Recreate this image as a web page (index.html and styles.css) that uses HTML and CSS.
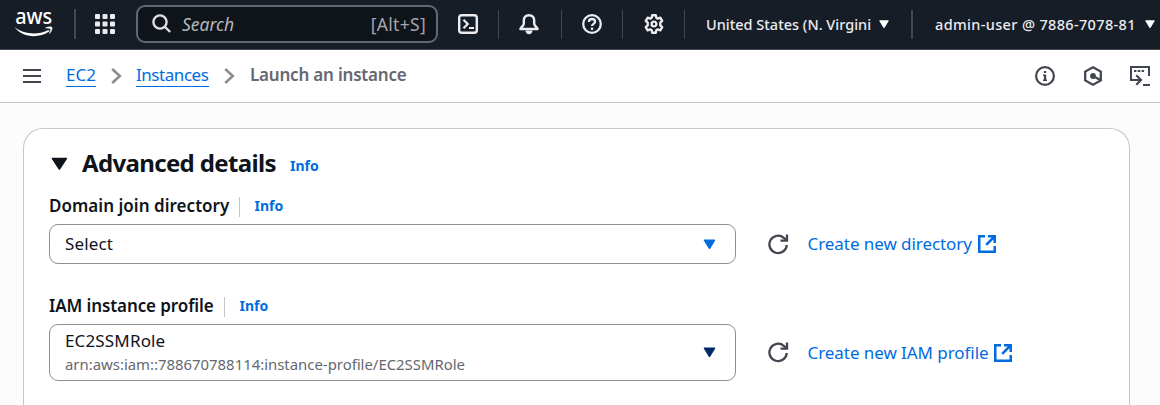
FILE: index.html
```html
<!DOCTYPE html>
<html lang="en">
<head>
<meta charset="utf-8">
<title>Launch an instance</title>
<link rel="stylesheet" href="styles.css">
</head>
<body>
<header class="topnav">
  <svg class="logo" width="40" height="34" viewBox="0 -6 40 34"><text class="logo-text" x="1.200" y="14" textLength="37" lengthAdjust="spacingAndGlyphs">aws</text><path d="M.3 17.300c10.500 7.300 23 8.200 34.200 2.700l1 1.200C24.500 28.600 9.500 28 .3 17.300z" fill="#fff"/><path d="M31.500 18c3.200-1.500 6-1.300 6.500-.6.500.9-.4 4.300-2.600 6.200.9-2.400 1.500-4.200 1.100-4.700-.4-.6-2.400-.7-5-.9z" fill="#fff" stroke="#fff" stroke-width=".5"/></svg>
  <span class="divider d-logo"></span>
  <svg class="apps" width="20" height="20" viewBox="0 0 20 20" fill="#ebebf0"><rect width="5" height="5" rx="1"/><rect x="7.500" width="5" height="5" rx="1"/><rect x="15" width="5" height="5" rx="1"/><rect y="7.500" width="5" height="5" rx="1"/><rect x="7.500" y="7.500" width="5" height="5" rx="1"/><rect x="15" y="7.500" width="5" height="5" rx="1"/><rect y="15" width="5" height="5" rx="1"/><rect x="7.500" y="15" width="5" height="5" rx="1"/><rect x="15" y="15" width="5" height="5" rx="1"/></svg>
  <div class="search">
    <svg width="20" height="20" viewBox="0 0 20 20" fill="none" stroke="#dedee3" stroke-width="2.400"><circle cx="8" cy="8" r="6.600"/><path d="M12.700 12.700l5.500 5.300"/></svg>
    <span class="t search-text">Search</span>
    <span class="t search-key">[Alt+S]</span>
  </div>
  <svg class="ic-shell" width="20" height="20" viewBox="0 0 20 20" fill="none" stroke="#ebebf0" stroke-width="2.400"><rect x="1.200" y="1.200" width="17.600" height="17.600" rx="2.600"/><path d="M5.500 5.800L9.700 10l-4.200 4.200M11 14h5" stroke-width="2.200"/></svg>
  <span class="divider d1"></span>
  <svg class="ic-bell" width="20" height="21" viewBox="0 0 20 21"><path d="M10 1.200c-3.300 0-5.200 2.200-5.200 5v3.600c0 1.800-2.800 3.300-3.400 5.200h17.200c-.6-1.900-3.400-3.400-3.400-5.200V6.200c0-2.800-1.900-5-5.200-5z" fill="none" stroke="#ebebf0" stroke-width="2.400" stroke-linejoin="round"/><path d="M6.500 16.500h7c0 2.200-1.500 3.800-3.500 3.800s-3.500-1.600-3.500-3.800z" fill="#ebebf0"/></svg>
  <span class="divider d2"></span>
  <svg class="ic-help" width="20" height="20" viewBox="0 0 20 20" fill="none" stroke="#ebebf0" stroke-width="2.300"><circle cx="10" cy="10" r="8.800"/><path d="M6.900 7.900C6.900 6 8.200 5 10 5s3.100 1.100 3.100 2.700c0 2.100-3.100 2.200-3.100 4.300"/><path d="M10 13.600v2.300"/></svg>
  <span class="divider d3"></span>
  <svg class="ic-gear" width="20" height="20" viewBox="0 0 20 20" fill="none" stroke="#ebebf0" stroke-width="2.400" stroke-linejoin="round"><path d="M8.200 1.200h3.600l.5 2.500 1.500.9 2.500-.9 1.900 3.100-1.900 1.800v2.800l1.900 1.800-1.900 3.100-2.500-.9-1.500.9-.5 2.500H8.200l-.5-2.500-1.500-.9-2.500.9-1.900-3.100 1.900-1.800V8.600L1.800 6.800l1.900-3.100 2.500.9 1.500-.9z"/><circle cx="10" cy="10" r="2.400"/></svg>
  <span class="divider d4"></span>
  <span class="t region">United States (N. Virgini</span>
  <svg class="caret-region" width="10" height="9" viewBox="0 0 10 9"><path d="M.7.8h8.600L5 7.800z" fill="#fff" stroke="#fff" stroke-linejoin="round"/></svg>
  <span class="divider d5"></span>
  <span class="t account">admin-user @ 7886-7078-81</span>
  <svg class="caret-account" width="10" height="9" viewBox="0 0 10 9"><path d="M.7.8h8.600L5 7.800z" fill="#fff" stroke="#fff" stroke-linejoin="round"/></svg>
</header>

<nav class="crumbs">
  <svg class="menu" width="18" height="16" viewBox="0 0 18 16" fill="none" stroke="#424650" stroke-width="2"><path d="M0 2h18M0 8h18M0 14h18"/></svg>
  <a class="t crumb c-ec2">EC2</a>
  <svg class="chev" width="11" height="16" viewBox="0 0 11 16" fill="none" stroke="#8c8c94" stroke-width="2.600"><path d="M1.200 1l7.600 7-7.600 7"/></svg>
  <a class="t crumb c-inst">Instances</a>
  <svg class="chev" width="11" height="16" viewBox="0 0 11 16" fill="none" stroke="#8c8c94" stroke-width="2.600"><path d="M1.200 1l7.600 7-7.600 7"/></svg>
  <span class="t crumb-current">Launch an instance</span>
  <span class="tools">
    <svg width="20" height="20" viewBox="0 0 20 20"><circle cx="10" cy="10" r="8.900" fill="none" stroke="#424650" stroke-width="2.200"/><path d="M8.900 5h2.300v2H8.900zM8 8.500h3.200v5H12v1.600H8v-1.600h.9v-3.400H8z" fill="#424650"/></svg>
    <svg width="20" height="20" viewBox="0 0 20 20"><path d="M10 1.300l7.800 4.300v8.800L10 18.700l-7.800-4.300V5.600z" fill="none" stroke="#424650" stroke-width="2.300"/><circle cx="10" cy="10" r="2.900" fill="#424650"/><path d="M10 10l7.800 4.300" stroke="#424650" stroke-width="2.300"/></svg>
    <svg width="20" height="20" viewBox="0 0 20 20" fill="none" stroke="#424650" stroke-width="2"><path d="M5.300 14H1V1h18v9M13 19h7"/><path d="M4 5h2.500M7.800 5h2.500M11.600 5h2.500"/><path d="M4 14h6.500M6.300 9.200l4.700 4.800-4.700 4.800" stroke-width="2.200"/></svg>
  </span>
</nav>

<main class="page">
  <section class="card">
    <div class="card-head">
      <svg width="17" height="14" viewBox="0 0 17 14"><path d="M1.500 1.500h13.800L8.400 12z" fill="#0f141a" stroke="#0f141a" stroke-width="1.600" stroke-linejoin="round"/></svg>
      <h2 class="t title">Advanced details</h2>
      <a class="t info info-title">Info</a>
    </div>
    <div class="label-row">
      <label class="t label l-domain">Domain join directory</label>
      <span class="label-sep"></span>
      <a class="t info">Info</a>
    </div>
    <div class="field-row">
      <div class="select">
        <span class="t value v-select">Select</span>
        <svg class="select-caret" width="13" height="11" viewBox="0 0 13 11"><path d="M1 1h11L6.500 10z" fill="#006ce0" stroke="#006ce0" stroke-linejoin="round"/></svg>
      </div>
      <svg class="refresh" width="21" height="21" viewBox="0 0 21 21" fill="none" stroke="#424650" stroke-width="2.300"><path d="M18.800 11a8.700 8.700 0 1 1-3-7.200l2.400 2.200"/><path d="M19 .5v6.200h-6.500"/></svg>
      <a class="t link k-dir">Create new directory</a>
      <svg class="ext" width="18" height="18" viewBox="0 0 18 18" fill="none" stroke="#006ce0" stroke-width="2.500"><path d="M7 1.250H1.250v15.500h15.500V11M10 1.250h6.750V8M16.500 1.500L8.200 9.800"/></svg>
    </div>
    <div class="label-row second">
      <label class="t label l-iam">IAM instance profile</label>
      <span class="label-sep"></span>
      <a class="t info">Info</a>
    </div>
    <div class="field-row">
      <div class="select tall">
        <div class="stack">
          <span class="t value v-role">EC2SSMRole</span>
          <span class="t arn">arn:aws:iam::788670788114:instance-profile/EC2SSMRole</span>
        </div>
        <svg class="select-caret" width="13" height="11" viewBox="0 0 13 11"><path d="M1 1h11L6.500 10z" fill="#002b66" stroke="#002b66" stroke-linejoin="round"/></svg>
      </div>
      <svg class="refresh" width="21" height="21" viewBox="0 0 21 21" fill="none" stroke="#424650" stroke-width="2.300"><path d="M18.800 11a8.700 8.700 0 1 1-3-7.200l2.400 2.200"/><path d="M19 .5v6.200h-6.500"/></svg>
      <a class="t link k-iam">Create new IAM profile</a>
      <svg class="ext" width="18" height="18" viewBox="0 0 18 18" fill="none" stroke="#006ce0" stroke-width="2.500"><path d="M7 1.250H1.250v15.500h15.500V11M10 1.250h6.750V8M16.500 1.500L8.200 9.800"/></svg>
    </div>
  </section>
</main>
</body>
</html>
```
FILE: styles.css
```css
* { box-sizing: border-box; }
body {
  margin: 0;
  height: 405px;
  overflow: hidden;
  display: flex;
  flex-direction: column;
  background: #fcfcfd;
  color: #0f141a;
  font-family: "Noto Sans", "Open Sans", sans-serif;
  font-size: 17px;
}
svg { display: block; flex: none; }
.t { display: block; flex: none; white-space: nowrap; line-height: 24px; }

.topnav {
  flex: none;
  height: 50px;
  display: flex;
  align-items: center;
  padding: 0 0 1px 14px;
  background: #161d26;
  border-bottom: 1px solid #424650;
  color: #ebebf0;
}
.logo { margin-top: -7px; overflow: visible; }
.logo-text { font-family: "Noto Sans", sans-serif; font-size: 21.500px; font-weight: 500; fill: #fff; }
.divider { flex: none; width: 1px; height: 29px; background: #424650; }
.d-logo { width: 2px; height: 30px; margin-left: 20px; }
.apps { margin-left: 19px; }
.search {
  flex: none;
  width: 302px;
  height: 38px;
  margin-left: 21px;
  padding: 0 10px 0 14px;
  display: flex;
  align-items: center;
  background: #0f141a;
  border: 2px solid #656871;
  border-radius: 9px;
}
.search-text { margin-left: 10px; width: 60px; font-size: 17.500px; font-style: italic; color: #b4b4bb; }
.search-key { margin-left: auto; font-size: 17.500px; letter-spacing: .3px; color: #a4a4ad; }
.ic-shell { margin-left: 20px; }
.d1 { margin-left: 20px; }
.ic-bell { margin-left: 20px; }
.d2 { margin-left: 22px; }
.ic-help { margin-left: 20px; }
.d3 { margin-left: 20px; }
.ic-gear { margin-left: 21px; }
.d4 { margin-left: 20px; }
.region { margin-left: 21px; width: 173px; font-size: 14.500px; font-weight: 500; }
.d5 { width: 2px; margin-left: 22px; }
.account { margin-left: 22px; width: 210px; font-size: 14.500px; font-weight: 500; letter-spacing: .35px; }

.crumbs {
  flex: none;
  height: 53px;
  display: flex;
  align-items: center;
  padding: 0 10px 0 23px;
  background: #fff;
  border-bottom: 1px solid #c6c6cd;
}
.crumb { color: #006ce0; height: 22px; line-height: 20px; border-bottom: 1px solid #006ce0; margin-top: -1px; }
.c-ec2 { margin-left: 25px; width: 30px; }
.c-inst { margin-left: 14px; width: 73px; letter-spacing: -.45px; }
.chev { margin-left: 15px; }
.crumb-current { margin-left: 15px; color: #656871; font-weight: 600; margin-top: -2px; letter-spacing: -.2px; }
.tools { display: flex; gap: 27.500px; margin-left: auto; }

.page { flex: 1; display: flex; padding: 25px 30px 0 23px; }
.card {
  flex: 1;
  padding: 19px 25px 0;
  background: #fff;
  border: 1px solid #c6c6cd;
  border-bottom: 0;
  border-radius: 20px 20px 0 0;
}
.card-head { display: flex; align-items: center; height: 30px; padding: 1px 0 0 2px; }
.title { margin: -1px 0 0 14px; width: 195px; font-size: 24px; font-weight: 700; line-height: 30px; letter-spacing: -.65px; }
.info { color: #006ce0; font-size: 14px; font-weight: 700; }
.info-title { margin: 5px 0 0 13px; }
.label-row { display: flex; align-items: center; height: 24px; margin-top: 16px; margin-bottom: 6px; }
.label { font-weight: 600; }
.l-domain { width: 180px; letter-spacing: .03px; }
.l-iam { width: 165px; letter-spacing: -.1px; }
.label-sep { width: 1px; height: 20px; margin: 2px 14.500px 0 10px; background: #c6c6cd; }
.field-row { display: flex; align-items: center; }
.select {
  flex: none;
  width: 687px;
  height: 40px;
  padding: 0 19px 0 15px;
  display: flex;
  align-items: center;
  justify-content: space-between;
  border: 1px solid #8c8c94;
  border-radius: 9px;
}
.select.tall { height: 57px; }
.second { margin-top: 30px; }
.value { letter-spacing: .15px; }
.stack { display: flex; flex-direction: column; padding-bottom: 1px; }
.arn { color: #656871; font-size: 14.900px; line-height: 22px; }
.refresh { margin-left: 32px; }
.link { margin-left: 18.500px; color: #006ce0; letter-spacing: -.06px; }
.k-dir { width: 165.500px; }
.k-iam { width: 181.500px; }
.ext { margin-left: 5px; }
```
